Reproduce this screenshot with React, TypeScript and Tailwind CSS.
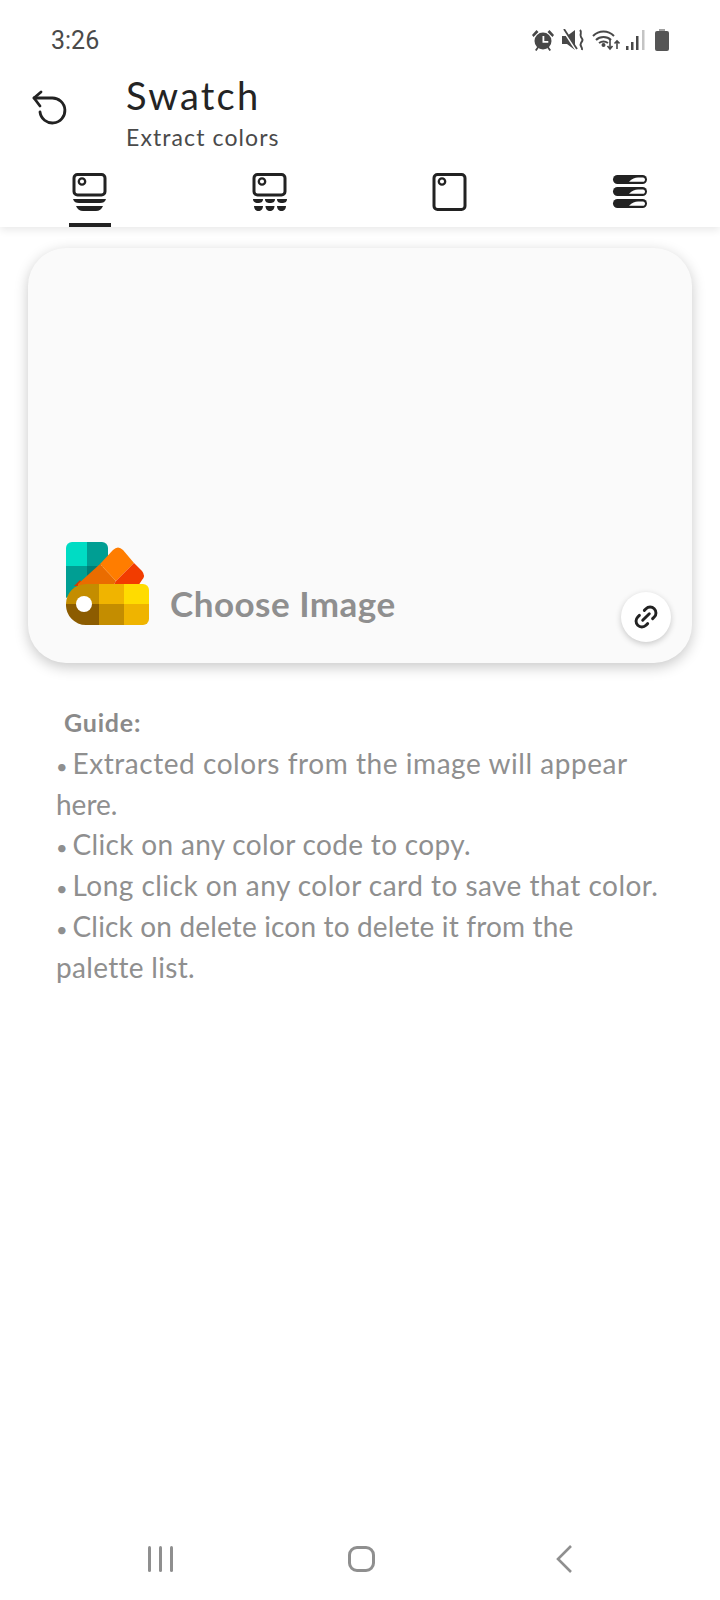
import { Link2 } from "lucide-react";

const font = "font-['Lato','Noto_Sans',sans-serif]";

function CardIcon({ kind }: { kind: "lines" | "dots" | "full" }) {
  return (
    <svg width="36" height="40" viewBox="0 0 36 40" fill="none">
      <rect
        x="2"
        y="2.500"
        width="31"
        height={kind === "full" ? 35 : 20.500}
        rx="3.500"
        stroke="#222"
        strokeWidth="3"
      />
      <circle cx="10" cy="9.500" r="3.200" stroke="#222" strokeWidth="2.300" />
      {kind === "lines" && (
        <>
          <path d="M1 27h33c-1 3-3 4-6 4H7c-3 0-5-1-6-4z" fill="#222" />
          <path d="M4 34h27c-1 3-4 5-7 5H11c-3 0-6-2-7-5z" fill="#222" />
        </>
      )}
      {kind === "dots" && (
        <>
          <path d="M1 27h10c0 3-2 4-5 4s-5-1-5-4zM13 27h10c0 3-2 4-5 4s-5-1-5-4zM25 27h10c0 3-2 4-5 4s-5-1-5-4z" fill="#222" />
          <path d="M2 34h9c0 3-2 5-4.500 5S2 37 2 34zM13.500 34h9c0 3-2 5-4.500 5s-4.500-2-4.500-5zM25 34h9c0 3-2 5-4.500 5S25 37 25 34z" fill="#222" />
        </>
      )}
    </svg>
  );
}

function SliderIcon() {
  return (
    <svg width="36" height="40" viewBox="0 0 36 40">
      {[3, 15, 27].map((y) => (
        <g key={y}>
          <rect x="1" y={y} width="34" height="9" rx="4.500" fill="#222" />
          <path d={`M17 ${y + 6.800}c3-3 6-4.300 9-4.300h5c1 0 2 1 2 2.200s-1 2.100-2 2.100z`} fill="#fff" />
        </g>
      ))}
    </svg>
  );
}

function Swatches() {
  return (
    <svg width="84" height="84" viewBox="0 0 84 84" className="shrink-0">
      <path d="M0 6a6 6 0 0 1 6-6h15v24H0z" fill="#00dcc4" />
      <path d="M21 0h15a6 6 0 0 1 6 6v14L21 30z" fill="#009e93" />
      <path d="M0 24h21v20L0 56z" fill="#009e93" />
      <path d="M21 24h16L21 40z" fill="#007e76" />
      <path d="M8 44l6-6 4 6z" fill="#d23a00" />
      <path d="M34 22 12 42v2h35l3-5z" fill="#ea6c00" />
      <path d="M34 22 47 8q5-5 10 0l11 13-18 18z" fill="#ff7d00" />
      <path d="M68 21l8 8q4 5 0 9l-4 6H47l3-5z" fill="#f23c00" />
      <path d="M0 62a20 20 0 0 1 20-20h13v21H0z" fill="#c48d00" />
      <path d="M0 62h33v21H20A20 20 0 0 1 0 62z" fill="#8c5c00" />
      <path d="M33 42h25v20H33z" fill="#f0b400" />
      <path d="M33 62h25v21H33z" fill="#c48d00" />
      <path d="M58 42h19a6 6 0 0 1 6 6v14H58z" fill="#ffdc00" />
      <path d="M58 62h25v15a6 6 0 0 1-6 6H58z" fill="#efb400" />
      <circle cx="18" cy="62" r="8" fill="#fff" />
    </svg>
  );
}

function StatusIcons() {
  return (
    <div className="flex items-center">
      <svg width="22" height="22" viewBox="0 0 22 22" fill="#484848">
        <circle cx="11" cy="12" r="8.500" />
        <path d="M0 6l4.500-5 2 2-5 5zM22 6l-4.500-5-2 2 5 5zM3 21l2.500-3.500 1.500 1-2.500 3.500zM19 21l-2.500-3.500-1.500 1 2.500 3.500z" />
        <path d="M10.500 7h1.800v5h4v1.700h-5.800z" fill="#fff" />
      </svg>
      <svg width="24" height="22" viewBox="0 0 24 22" fill="#484848" className="ml-[7px]">
        <path d="M1 7h5l8-6v20l-8-6H1z" />
        <path d="M2 1l13 20" stroke="#fff" strokeWidth="2" />
        <path d="M3 0l13 20" stroke="#484848" strokeWidth="1.800" />
        <path d="M19 1c3 3-1 4 1 7s2 3 0 6 2 4 1 7" stroke="#484848" strokeWidth="2" fill="none" />
      </svg>
      <svg width="28" height="22" viewBox="0 0 28 22" fill="none" stroke="#484848" strokeWidth="2" className="ml-[7px]">
        <path d="M1 7c6-6 15-6 21 0M4 11c4-4 11-4 15 0M7 14c3-2 6-2 9 0" />
        <circle cx="11.500" cy="16" r="1" fill="#484848" />
        <path d="M18 11v9M15.500 17l2.500 3 2.500-3M25 20v-8M22.500 14.500l2.500-2.500 2.500 2.500" strokeWidth="1.600" />
      </svg>
      <svg width="19" height="22" viewBox="0 0 19 22" fill="#484848" className="ml-[6px]">
        <rect x="0" y="17" width="2.500" height="4" />
        <rect x="5" y="13" width="2.500" height="8" />
        <rect x="10" y="7" width="2.500" height="14" />
        <rect x="16" y="1" width="2.500" height="20" fill="#c4c4c4" />
      </svg>
      <svg width="16" height="22" viewBox="0 0 16 22" fill="#555" className="ml-[9px]">
        <path d="M5 0h6v2H5z" fill="#a0a0a0" />
        <rect x="1" y="2" width="14" height="20" rx="2" />
      </svg>
    </div>
  );
}

function Bullet() {
  return <span className="inline-block w-[16.500px] text-[20px] leading-none">•</span>;
}

export default function App() {
  return (
    <div className={`w-[720px] h-[1600px] bg-white flex flex-col ${font}`}>
      <header className="relative z-10 h-[227px] shrink-0 flex flex-col shadow-[0_3px_8px_rgba(0,0,0,0.09)]">
        <div className="h-[77px] pt-[25px] pl-[51px] pr-[50px] flex items-start justify-between">
          <span className="text-[25px] leading-[32px] text-[#4a4a4a] font-['Roboto',sans-serif]">3:26</span>
          <div className="pt-[4px]">
            <StatusIcons />
          </div>
        </div>
        <div className="flex items-start">
          <div className="w-[126px] pl-[31px] pt-[12px]">
            <svg width="36" height="36" viewBox="0 0 36 36" fill="none" stroke="#222" strokeWidth="2.800" strokeLinecap="round" strokeLinejoin="round">
              <path d="M3 9h18a12.500 12.500 0 1 1-12 14" />
              <path d="M10 3 3 9l6 8" />
            </svg>
          </div>
          <div className="flex flex-col">
            <h1 className="text-[38px] leading-[36px] text-[#242424] tracking-[2.2px]">Swatch</h1>
            <p className="mt-[10px] text-[23px] leading-[28px] text-[#4a4a4a] tracking-[1.1px]">Extract colors</p>
          </div>
        </div>
        <nav className="flex-1 grid grid-cols-4 mt-[21px]">
          <div className="relative flex justify-center">
            <CardIcon kind="lines" />
            <div className="absolute bottom-0 left-[69px] w-[42px] h-[4px] bg-[#222]" />
          </div>
          <div className="flex justify-center">
            <CardIcon kind="dots" />
          </div>
          <div className="flex justify-center">
            <CardIcon kind="full" />
          </div>
          <div className="flex justify-center">
            <SliderIcon />
          </div>
        </nav>
      </header>

      <main className="flex-1 flex flex-col">
        <section className="relative mx-[28px] mt-[21px] h-[415px] shrink-0 rounded-[38px] bg-[#fafafa] shadow-[0_4px_14px_rgba(0,0,0,0.22)] flex items-end pl-[38px] pb-[37px]">
          <Swatches />
          <span className="ml-[20px] mb-[3px] text-[35px] leading-[40px] font-bold text-[#8f8f8f] tracking-[0.5px]">Choose Image</span>
          <button className="absolute right-[21px] bottom-[21px] w-[50px] h-[50px] rounded-full bg-white shadow-[0_2px_6px_rgba(0,0,0,0.2)] flex items-center justify-center">
            <Link2 className="w-[28px] h-[28px] text-[#222] -rotate-45" strokeWidth={2.5} />
          </button>
        </section>

        <div className="mt-[39px] pl-[56px] w-[690px] text-[28px] leading-[40.8px] text-[#8f8f8f]">
          <p className="pl-[8px] font-bold text-[25px] text-[#8a8a8a] tracking-[0.8px]">Guide:</p>
          <p className="tracking-[0.55px]"><Bullet />Extracted colors from the image will appear</p>
          <p>here.</p>
          <p className="tracking-[0.33px]"><Bullet />Click on any color code to copy.</p>
          <p className="tracking-[0.47px]"><Bullet />Long click on any color card to save that color.</p>
          <p className="tracking-[0.16px]"><Bullet />Click on delete icon to delete it from the</p>
          <p className="tracking-[0.31px]">palette list.</p>
        </div>
      </main>

      <footer className="h-[74px] shrink-0 grid grid-cols-3 pb-[9px] px-[60px] items-center">
        <div className="flex justify-center gap-[8px]">
          <span className="w-[3px] h-[26px] bg-[#8f8f8f] rounded-sm" />
          <span className="w-[3px] h-[26px] bg-[#8f8f8f] rounded-sm" />
          <span className="w-[3px] h-[26px] bg-[#8f8f8f] rounded-sm" />
        </div>
        <div className="flex justify-center pl-[2px]">
          <span className="w-[27px] h-[26px] rounded-[9px] border-[3px] border-[#8f8f8f]" />
        </div>
        <div className="flex justify-center pl-[8px]">
          <svg width="18" height="30" viewBox="0 0 18 30" fill="none" stroke="#8f8f8f" strokeWidth="2.600">
            <path d="M16 2 3 15l13 13" />
          </svg>
        </div>
      </footer>
    </div>
  );
}
